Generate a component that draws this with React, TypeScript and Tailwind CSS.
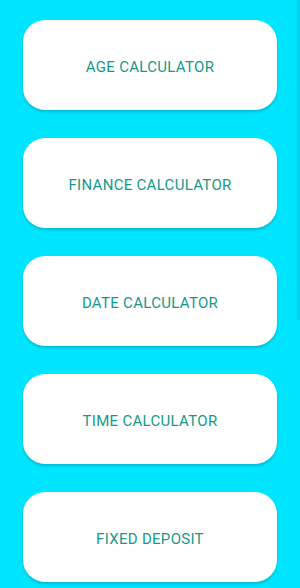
const items = ['AGE CALCULATOR', 'FINANCE CALCULATOR', 'DATE CALCULATOR', 'TIME CALCULATOR', 'FIXED DEPOSIT']

export default function App() {
  return (
    <div
      className="relative h-[588px] w-[300px] overflow-hidden bg-[#00e5ff]"
      style={{ fontFamily: 'Roboto, "Noto Sans", sans-serif' }}
    >
      <div className="flex flex-col gap-[28px] px-[23px] pt-[20px]">
        {items.map((label) => (
          <button
            key={label}
            className="flex h-[90px] w-[254px] items-center justify-center rounded-[22px] bg-white pt-[4px] text-[15px] font-normal tracking-[0.3px] text-[#16998a] shadow-[0_2px_3px_rgba(0,0,0,0.18)]"
          >
            {label}
          </button>
        ))}
      </div>
      {/* scrollbar */}
      <div className="absolute right-0 top-0 h-[320px] w-[3px] bg-[#00d2ec]" />
    </div>
  )
}
